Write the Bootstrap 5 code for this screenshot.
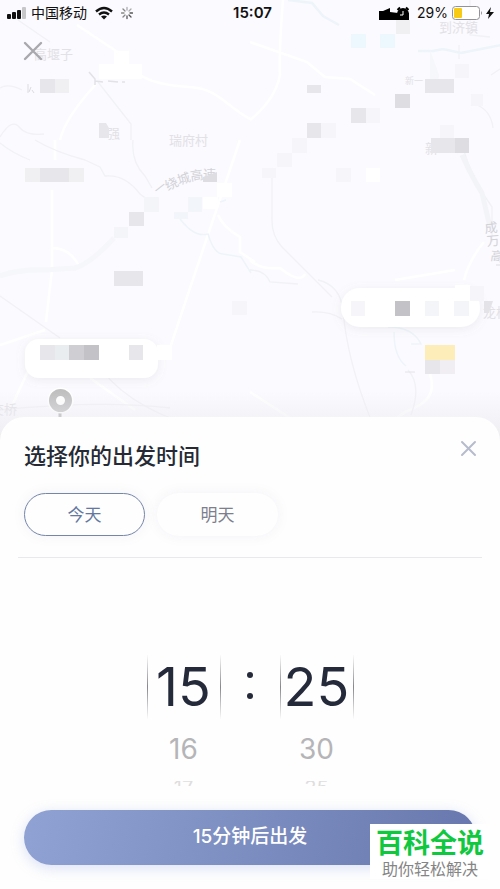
<!DOCTYPE html>
<html lang="zh-CN">
<head>
<meta charset="utf-8">
<meta name="viewport" content="width=device-width, initial-scale=1">
<title>选择你的出发时间</title>
<link href="https://cdn.jsdelivr.net/npm/bootstrap@5.3.0/dist/css/bootstrap.min.css" rel="stylesheet">
<style>
body { font-family: Inter, "Noto Sans CJK SC", sans-serif; background: #fbfafe; color: #252a3a; }
.status-bar { display: grid; grid-template-columns: 1fr auto 1fr; height: 25px; padding: 0 6px 0 7px; color: #111; font-size: 14px; line-height: 25px; }
.carrier { font-size: 14px; }
.clock { font-size: 15px; font-weight: 600; }
.map-area { min-height: 360px; }
.map-area::after { content: ""; position: absolute; inset: auto 0 0; height: 50px; background: linear-gradient(#eeedf200, #eeedf2); }
.map-art text { font-family: "Noto Sans CJK SC", sans-serif; }
.top-layer { z-index: 1; }
.icon-btn { border: 0; background: none; padding: 4px; line-height: 0; }
.map-close { margin: 12px 0 0 19px; }
.sheet { background: #fefefe; border-radius: 24px 24px 0 0; padding: 20px 24px 24px; margin-top: -24px; z-index: 2; }
.sheet-title { font-size: 22px; line-height: 34px; font-weight: 500; color: #252a35; margin: 2px 0 0; }
.sheet-close { margin-right: -5px; margin-top: -1px; }
.day-btn { width: 121px; height: 43px; border-radius: 22px; padding: 2px 0 0; font-size: 17px; color: #7d7f8e; background: #fefefe; box-shadow: 0 0 12px #8f80b01c; border: 1px solid transparent; }
.day-btn.chosen { color: #6377a0; border-color: #7586a8; }
.rule { margin: 21px -6px 0; border-top: 1px solid #e9e8ed; }
.wheel-box { padding-top: 97px; height: 252px; }
.wheel { width: 74px; text-align: center; }
.wheel-now { height: 64px; line-height: 64px; font-size: 54px; color: #252a3b; border: solid transparent; border-width: 0 1px; border-image: linear-gradient(#fff, #88868c, #fff) 1; }
.wheel-next { font-size: 28px; line-height: 32px; color: #b5b5b8; margin-top: 14px; }
.wheel-last { font-size: 20px; line-height: 14px; height: 5px; overflow: hidden; color: #dededf; margin-top: 16px; }
.dots { width: 59px; margin-top: 17px; height: 27px; }
.dots i { width: 6px; height: 6px; border-radius: 50%; background: #252a3b; }
.go-btn { height: 55px; border-radius: 28px; border: 0; color: #fff; font-size: 19px; font-weight: 500; background: linear-gradient(100deg, #90a2d3, #6878ae); box-shadow: 0 3px 14px #7d8fe047; }
.watermark { right: 10px; bottom: 10px; width: 120px; height: 55px; background: #fff; text-align: center; z-index: 3; }
.watermark strong { display: block; color: #10c840; font-size: 27px; line-height: 35px; padding-top: 2px; font-weight: 700; }
.watermark span { display: block; color: #858585; font-size: 16px; line-height: 16px; }
</style>
<script src="https://cdn.jsdelivr.net/npm/bootstrap@5.3.0/dist/js/bootstrap.bundle.min.js"></script>
</head>
<body>
<main class="d-flex flex-column min-vh-100 position-relative overflow-hidden">
  <section class="map-area flex-grow-1 position-relative">
    <svg class="map-art position-absolute top-0 start-0 w-100 h-100" viewBox="0 0 500 442" preserveAspectRatio="xMidYMin slice" aria-label="地图">
      <defs><filter id="soft" x="-20%" y="-50%" width="140%" height="200%"><feDropShadow dx="0" dy="2" stdDeviation="5" flood-color="#8a8696" flood-opacity=".13"/></filter></defs>
      <rect width="500" height="442" fill="#fbfafe"/>
      <g fill="none" stroke="#fff" stroke-width="2.5">
        <path d="M77 25l45 30M60 140q5-22 36-56M140 75q15 10 50 12c28 2 35 18 60 32M55 140v20M52 190v80l-6 52M52 248q18 0 27 18M240 140l-50 148-20 60M218 215q5 12 22 22v15l15 10M283 0q-4 50-3 75-5 25-30 45M250 42l57 20 18 15 25 2 25 16M250 260q10 10 30 8 20 16 25 6M464 280q5-20 20-38M0 345l45-15M90 378l45 32M10 410l30-65M250 392l40 26M430 374q8 25-18 35-15 6-19 14M395 280l60-10"/>
      </g>
      <g fill="none" stroke="#f1f2f6" stroke-width="1.3">
        <path d="M18 20l32 22M0 88q8-5 22 2M0 137q12-20 20-9 7 8 24 6M98 82l33 42v16M0 143q12 10 30 17M35 140q20 12 50 20l15 7 5 9q20-2 35 18l16 12M133 140q-2 22 12 36l7 12M272 176v45q0 15 10 26l50 50M318 280q22 5 25 30 4 50 28 110M312 312q18-1 30 7M0 296l60 42M90 350q20 45 85 70M470 0v35l20 2M459 45v14M462 145q10 35 30 62v35M493 128q-2-18-18-24l-2-10M491 75l9-6M250 270q15 0 20 12l28 2M408 370q14 15 3 45M0 410q100-10 170-2"/>
      </g>
      <g fill="none" stroke="#edf5fa" stroke-width="2.5">
        <path d="M288 0l24 3 11 13 16 9M418 51h15l10-2 18 4 40-8"/>
        <path stroke-width="1.5" d="M178 216q15 22 30 18 6 20 15 20l18 3 10 16M220 202l6-2M388 327q25 0 33 17h-10M394 332q0 25 12 34"/>
      </g>
      <path d="M0 276Q20 269 45 270L75 268Q90 264 114 238" fill="none" stroke="#f5f7fa" stroke-width="5"/>
      <path d="M462 155q10 22 20 38l8 34" fill="none" stroke="#f3f4f7" stroke-width="5"/>
      <path d="M430 50l9 25-1 8h-8z" fill="#f6f7fa"/>
      <g fill="#e2e1e6" font-size="13">
        <text x="34" y="59">高堰子</text><text x="169" y="145">瑞府村</text><text x="439" y="32">到济镇</text><text x="425" y="153">新</text><text x="-9" y="414">交桥</text><text x="483" y="317">龙桥</text><text x="107" y="138">强</text>
        <text x="405" y="84" font-size="9">新一</text>
        <g fill="#d2d2d8"><text transform="translate(158 195) rotate(-38)" font-size="12">一</text><text transform="translate(168 191) rotate(-28)">绕</text><text transform="translate(179 185) rotate(-18)">城</text><text transform="translate(191 181) rotate(-9)">高</text><text transform="translate(203 179)">速</text>
        <text x="485" y="233" transform="rotate(-5 485 233)">成</text><text x="487" y="246" transform="rotate(-5 487 246)">万</text><text x="490" y="260" transform="rotate(8 490 260)">高</text></g>
      </g>
      <path d="M496 265h5M28 84v9m3-6l-2 5m3-2l2 3" fill="none" stroke="#dcdce1"/>
      <path d="M89 72l6 7v6M95 81l8 1m5-1l10 1m4 0h3" fill="none" stroke="#e2e2e7" stroke-width="1.5"/>
      <g filter="url(#soft)" fill="#fff"><rect x="25" y="339" width="133" height="39" rx="14"/><rect x="341" y="288" width="139" height="39" rx="19"/></g>
      <g fill="#fff"><path d="M114 51h15v14h-15zM99 64h43v15H99zM217 183h15v14h-15zM203 197h15v12h-15zM366 168h14v14h-14zM157 345h15v15h-15zM455 285h15v20h-15z"/></g>
      <g fill="#e7e7eb"><path d="M40 79h15v14H40zM99 123h7l3 5v10H99zM40 168h29v14H40zM129 212h15v14h-15zM114 271h29v15h-29zM307 85h14v8h-14zM425 79h29v14h-29zM351 108h15v15h-15zM307 123h14v15h-14zM431 138h24v15h-24zM40 345h15v15H40zM129 345h14v15h-14zM425 360h15v14h-15z"/></g>
      <g fill="#f0f0f3"><path d="M55 79h14v14H55zM25 168h15v14H25zM69 168h15v14H69zM396 20h14v14h-14z"/></g>
      <g fill="#f6f5f9"><path d="M366 108h14v15h-14zM321 123h15v15h-15zM455 64h14v14h-14zM292 138h15v15h-15zM277 153h15v14h-15zM262 168h14v10h-14zM336 168h15v14h-15zM232 301h15v14h-15zM471 94h12v12h-12zM470 286h14v15h-14zM440 125h14v13h-14zM351 301h14v15h-14z"/></g>
      <g fill="#f3f5f8"><path d="M114 227h14v11h-14zM144 197h15v15h-15zM425 301h14v15h-14zM454 301h15v15h-15z"/></g>
      <path d="M55 345h14v15H55z" fill="#e9edef"/><path d="M440 360h15v14h-15z" fill="#f0eef3"/>
      <path d="M351 34h15v14h-15zM380 34h15v14h-15z" fill="#edf7fe"/><path d="M188 197h14v15h-14zM174 212h14v7h-14z" fill="#f2f6fa"/>
      <path d="M395 94h15v14h-15zM203 182v-5l14-5v10zM455 138h14v15h-14z" fill="#dddde2"/>
      <path d="M69 345h15v15H69z" fill="#cfcfd3"/><path d="M84 345h15v15H84zM395 301h15v15h-15z" fill="#c2c2c7"/>
      <path d="M484 301h9l-4 12h-5z" fill="#e4e4e8"/>
      <rect x="425" y="345" width="30" height="15" fill="#fdedb9"/><path d="M405 372h10" stroke="#e4e4e8"/>
      <path d="M60 412v9" stroke="#aaa" stroke-width="3"/><circle cx="60.500" cy="400.500" r="13" fill="#fff"/><circle cx="60.500" cy="400.500" r="8" fill="#fff" stroke="#bfbfc0" stroke-width="7"/>
    </svg>
    <header class="status-bar position-relative top-layer">
      <div class="d-flex align-items-center">
        <svg width="20" height="24" viewBox="0 0 20 24" aria-hidden="true"><g fill="#111"><rect y="13" width="4" height="5" rx="1"/><rect x="5" y="11" width="4" height="7" rx="1"/><rect x="10" y="9" width="4" height="9" rx="1"/></g><rect x="15" y="6" width="4" height="12" rx="1" fill="#c7c7ca"/></svg>
        <span class="carrier ms-1 me-1 text-nowrap">中国移动</span>
        <svg class="ms-1 flex-shrink-0" width="18" height="24" viewBox="0 0 18 24" aria-hidden="true"><g fill="none" stroke="#111" stroke-width="2.4"><path d="M1 10.500q8-7 16 0M4 13.500q5-4 10 0"/></g><path d="M6 15.500q3-2 6 0l-3 3z" fill="#111"/></svg>
        <svg class="ms-2 flex-shrink-0" width="12" height="24" viewBox="-6 -12 12 24" aria-hidden="true"><g stroke-width="1.3" stroke-linecap="round"><path d="M0-3v-2.500M2-2l2-2" stroke="#aaa"/><path d="M3 0h2.500M2 2l2 2M0 3v2.500" stroke="#555"/><path d="M-2 2l-2 2M-3 0h-2.500M-2-2l-2-2" stroke="#888"/></g></svg>
      </div>
      <time class="clock ps-1">15:07</time>
      <div class="d-flex align-items-center justify-content-end">
        <svg class="flex-shrink-0" width="30" height="24" viewBox="0 0 30 24" aria-hidden="true"><path d="M0 19V10h4L11 7v4l8 1h11v7z"/><circle cx="24" cy="13" r="6"/><path d="M18.500 9l2.500-2.500M29.500 9L27 6.500" stroke="#000" stroke-width="2"/><path d="M24 10v4h-3" fill="none" stroke="#fff"/></svg>
        <span class="ms-2">29%</span>
        <svg class="ms-1 flex-shrink-0" width="42" height="24" viewBox="0 0 42 24" aria-hidden="true"><rect x=".5" y="5.500" width="27" height="13" rx="3" fill="#fff" stroke="#929298"/><rect x="2" y="7" width="8" height="10" rx="1" fill="#f7cb15"/><path d="M29 10q2 2 0 4z" fill="#929298"/><path d="M39 6l-5 7h3l-1 5 6-7h-4z" fill="#111"/></svg>
      </div>
    </header>
    <button class="icon-btn map-close position-relative top-layer" type="button" aria-label="返回"><svg width="20" height="20" viewBox="0 0 20 20"><path d="M2 2l16 16M18 2L2 18" stroke="#a9a9ad" stroke-width="2.400" stroke-linecap="round"/></svg></button>
  </section>
  <section class="sheet position-relative">
    <div class="d-flex align-items-start justify-content-between">
      <h1 class="sheet-title">选择你的出发时间</h1>
      <button class="icon-btn sheet-close" type="button" aria-label="关闭"><svg width="17" height="17" viewBox="0 0 17 17"><path d="M2 2l13 13M15 2L2 15" stroke="#b6bccb" stroke-width="2" stroke-linecap="round"/></svg></button>
    </div>
    <div class="d-flex mt-3 pt-1 gap-2">
      <button class="btn day-btn chosen me-1" type="button" aria-pressed="true">今天</button>
      <button class="btn day-btn" type="button" aria-pressed="false">明天</button>
    </div>
    <div class="rule"></div>
    <div class="wheel-box d-flex justify-content-center">
      <div class="wheel"><div class="wheel-now">15</div><div class="wheel-next">16</div><div class="wheel-last">17</div></div>
      <div class="dots d-flex flex-column justify-content-between align-items-center" aria-hidden="true"><i></i><i></i></div>
      <div class="wheel"><div class="wheel-now">25</div><div class="wheel-next">30</div><div class="wheel-last">35</div></div>
    </div>
    <button class="btn go-btn w-100" type="button">15分钟后出发</button>
  </section>
  <aside class="watermark position-absolute"><strong>百科全说</strong><span>助你轻松解决</span></aside>
</main>
</body>
</html>
